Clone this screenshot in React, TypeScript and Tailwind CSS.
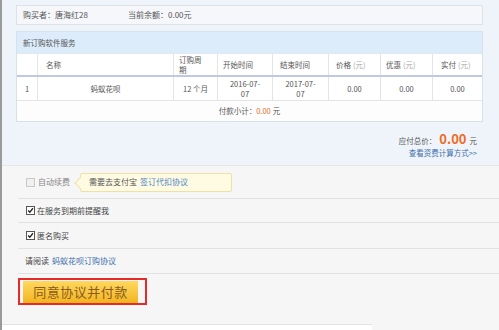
import React from "react";

const cols = "grid grid-cols-[21px_136px_44px_55px_56px_52px_52px_1fr]";

function Check({ checked, disabled }: { checked?: boolean; disabled?: boolean }) {
  return (
    <span
      className={`inline-flex items-center justify-center w-[9px] h-[9px] border ${
        disabled ? "border-[#c8c8c8] bg-[#f0f0f0]" : "border-[#555] bg-white"
      }`}
    >
      {checked && (
        <svg width="9" height="9" viewBox="0 0 9 9">
          <path d="M1.5 4.5 L3.6 6.8 L7.6 1.6" fill="none" stroke="#222" strokeWidth="1.7" />
        </svg>
      )}
    </span>
  );
}

export default function App() {
  return (
    <div
      className="w-[499px] h-[330px] overflow-hidden flex flex-col bg-[#f6f6f6] border-l-[2px] border-[#9a9a9a] text-[#444]"
      style={{ fontFamily: '"Noto Sans CJK SC", "Noto Sans", sans-serif' }}
    >
      {/* top blue section */}
      <div className="h-[165px] shrink-0 bg-[#eff4fa] pt-[5px] pl-[14px] pr-[16px] flex flex-col">
        <div className="h-[20px] border border-[#dde2e8] bg-[#f5f7fa] flex items-center pl-[6px] text-[8px] text-[#555]">
          <span className="w-[105px]">购买者：唐海红28</span>
          <span>当前余额：0.00元</span>
        </div>
        <div className="mt-[6px] border border-[#d6e1ec] bg-white">
          <div className="h-[21px] bg-[#dcecfa] flex items-center pl-[6px] text-[7.5px] text-[#555]">
            新订购软件服务
          </div>
          <div className={`${cols} h-[24px] border-t border-[#e3e8ee] border-b-2 border-b-[#bccbe2] text-[7.5px] text-[#555] leading-[10px]`}>
            <div className="border-r border-[#e4e4e4]" />
            <div className="border-r border-[#e4e4e4] flex items-center pl-[8px]">名称</div>
            <div className="border-r border-[#e4e4e4] flex items-center pl-[5px]">
              <span>
                订购周
                <br />期
              </span>
            </div>
            <div className="border-r border-[#e4e4e4] flex items-center pl-[5px]">开始时间</div>
            <div className="border-r border-[#e4e4e4] flex items-center pl-[7px]">结束时间</div>
            <div className="border-r border-[#e4e4e4] flex items-center pl-[7px]">
              价格 <span className="text-[#aaa] ml-[2px]">(元)</span>
            </div>
            <div className="border-r border-[#e4e4e4] flex items-center pl-[5px]">
              优惠 <span className="text-[#aaa] ml-[2px]">(元)</span>
            </div>
            <div className="flex items-center pl-[8px]">
              实付 <span className="text-[#aaa] ml-[2px]">(元)</span>
            </div>
          </div>
          <div className={`${cols} h-[24px] border-b border-[#e4e4e4] text-[7.5px] text-[#555] leading-[10px]`}>
            <div className="border-r border-[#e4e4e4] flex items-center justify-center">1</div>
            <div className="border-r border-[#e4e4e4] flex items-center justify-center">蚂蚁花呗</div>
            <div className="border-r border-[#e4e4e4] flex items-center justify-center">12 个月</div>
            <div className="border-r border-[#e4e4e4] flex flex-col items-center justify-center">
              <span>2016-07-</span>
              <span>07</span>
            </div>
            <div className="border-r border-[#e4e4e4] flex flex-col items-center justify-center">
              <span>2017-07-</span>
              <span>07</span>
            </div>
            <div className="border-r border-[#e4e4e4] flex items-center justify-center">0.00</div>
            <div className="border-r border-[#e4e4e4] flex items-center justify-center">0.00</div>
            <div className="flex items-center justify-center">0.00</div>
          </div>
          <div className="h-[20px] flex items-center justify-center text-[7.5px] text-[#555] bg-[#fdfdfd]">
            付款小计：<span className="text-[#e2712f]">0.00</span>
            <span className="ml-[2px]">元</span>
          </div>
        </div>
        <div className="flex flex-col items-end pr-[6px] mt-[10px]">
          <div className="flex items-baseline text-[7.5px] text-[#555]">
            应付总价：
            <span className="text-[13px] font-bold text-[#f06a1f] mx-[3px] leading-[14px]">0.00</span>
            元
          </div>
          <div className="text-[7.5px] text-[#3f6fae] mt-[1px]">查看资费计算方式&gt;&gt;</div>
        </div>
      </div>

      {/* options section */}
      <div className="flex-1 flex flex-col border-t border-[#e6e6e6]">
        <div className="h-[33px] ml-[16px] border-b border-[#e2e2e2] flex items-center pl-[8px] text-[8px]">
          <Check disabled />
          <span className="ml-[3px] text-[#888]">自动续费</span>
          <div className="relative ml-[10px] h-[19px] w-[152px] bg-[#fffbe2] border border-[#eee0a6] rounded-[2px] flex items-center pl-[8px] text-[#555]">
            <span className="absolute left-[-5px] top-[5px] w-[8px] h-[8px] rotate-45 bg-[#fffbe2] border-l border-b border-[#eee0a6]" />
            <span className="relative">需要去支付宝</span>
            <span className="relative ml-[3px] text-[#4d86c6]">签订代扣协议</span>
          </div>
        </div>
        <div className="h-[24px] ml-[16px] border-b border-[#e2e2e2] flex items-center pl-[8px] text-[8px] text-[#444]">
          <Check checked />
          <span className="ml-[2px]">在服务到期前提醒我</span>
        </div>
        <div className="h-[26px] ml-[16px] border-b border-[#e2e2e2] flex items-center pl-[8px] text-[8px] text-[#444]">
          <Check checked />
          <span className="ml-[2px]">匿名购买</span>
        </div>
        <div className="h-[25px] ml-[16px] border-b border-[#e2e2e2] flex items-center pl-[7px] text-[8px] text-[#444]">
          请阅读<span className="ml-[3px] text-[#3f6fae]">蚂蚁花呗订购协议</span>
        </div>
        <div className="h-[50px] pl-[16px] pt-[4px]">
          <div className="w-[129px] h-[27px] border-2 border-[#e42a2a] flex items-center pl-[3px]">
            <div className="w-[115px] h-[22px] bg-gradient-to-b from-[#ffd85c] to-[#f2b41a] flex items-center justify-center text-[13px] text-[#8a5a1c] tracking-[0.5px]">
              同意协议并付款
            </div>
          </div>
        </div>
        <div className="flex-1 w-[370px] bg-white border-t border-[#e2e2e2]" />
      </div>
    </div>
  );
}
